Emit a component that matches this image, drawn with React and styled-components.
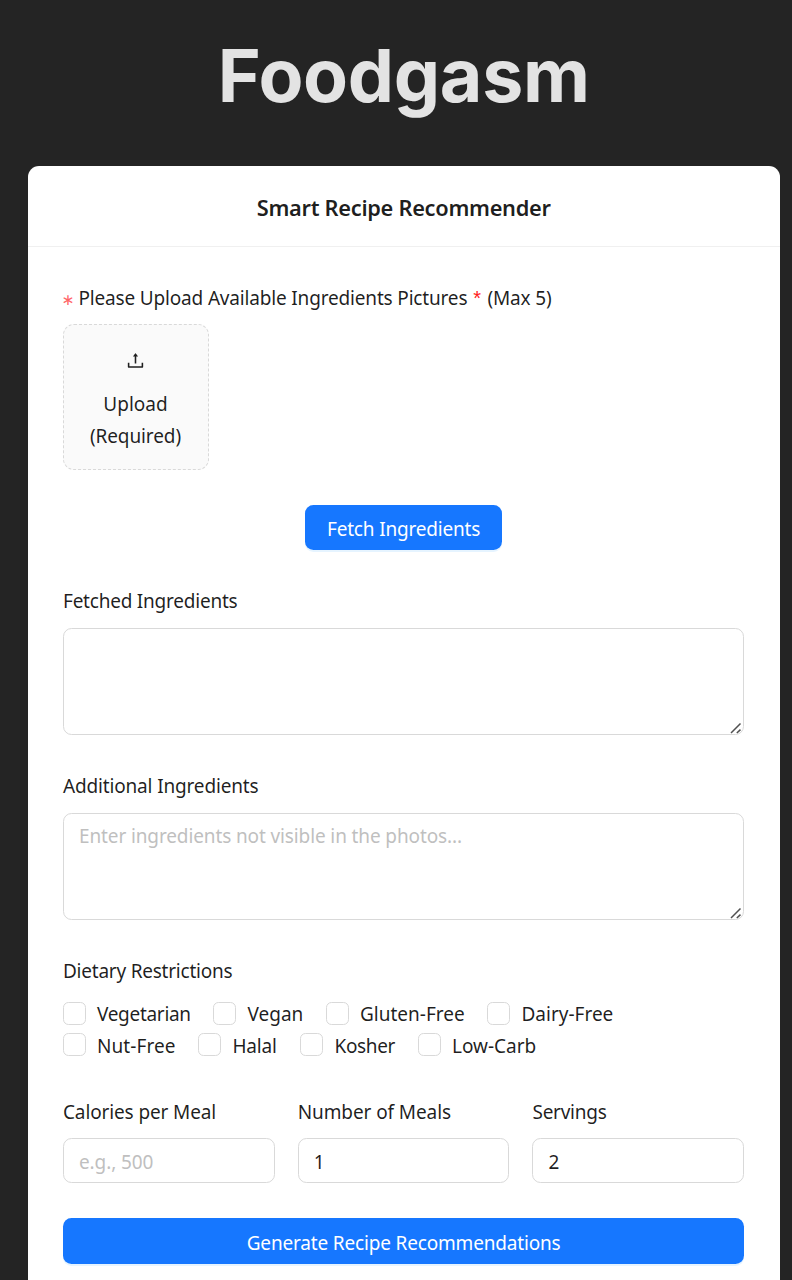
import React from "react";
import styled, { createGlobalStyle } from "styled-components";
import { AiOutlineUpload } from "react-icons/ai";

const GlobalStyle = createGlobalStyle`
  *, *::before, *::after { box-sizing: border-box; }
  html, body { margin: 0; height: 100%; overflow: hidden; background: #242424; }
  body, input, textarea, button {
    font-family: "Noto Sans", "Open Sans", sans-serif;
    font-size: 19px;
    color: rgba(0, 0, 0, 0.88);
  }
`;

const Page = styled.main`
  display: flex;
  flex-direction: column;
  padding: 0 12.4px 0 27.8px;
  height: 100vh;
  overflow: hidden;
`;

const Title = styled.h1`
  flex: none;
  margin: 0;
  height: 166px;
  padding-top: 31px;
  font-family: Inter, sans-serif;
  font-size: 73.4px;
  font-weight: 700;
  line-height: 90px;
  text-align: center;
  color: #e3e3e3;
  letter-spacing: -0.3px;
`;

const Card = styled.section`
  flex: none;
  height: 1160px;
  background: #fff;
  border-radius: 11px;
`;

const CardHeader = styled.header`
  height: 81px;
  display: flex;
  align-items: center;
  justify-content: center;
  border-bottom: 1px solid #f0f0f0;
  font-size: 21.8px;
  font-weight: 600;
  padding-top: 2px;
`;

const Form = styled.form`
  display: flex;
  flex-direction: column;
  gap: 34.7px;
  padding: 35px 35.4px 0 35.2px;
`;

const Field = styled.div`
  display: flex;
  flex-direction: column;
  min-width: 0;
`;

const Text = styled.span`
  letter-spacing: ${(p) => p.$track || 0}px;
  white-space: nowrap;
`;

const Label = styled.label`
  height: ${(p) => p.$height || 42.8}px;
  line-height: 33.4px;
  white-space: nowrap;
`;

const RequiredMark = styled.span`
  display: inline-block;
  width: 15.5px;
  font-family: "DejaVu Sans", sans-serif;
  font-size: 15.5px;
  text-indent: -1.5px;
  line-height: 20px;
  color: #ff6668;
`;

const Star = styled.span`
  margin: 0 2px 0 1px;
  font-family: "Liberation Sans", sans-serif;
  font-size: 20px;
  color: #ff2020;
`;

const UploadTile = styled.div`
  width: 146px;
  height: 146px;
  display: flex;
  flex-direction: column;
  align-items: center;
  padding: 25px 1px 0 0;
  border: 1px dashed #d9d9d9;
  border-radius: 11px;
  background: #fafafa;
  line-height: 31.5px;

  svg { display: block; margin-bottom: 18px; }
`;

const Button = styled.button`
  width: ${(p) => p.$width || "100%"};
  height: 45.8px;
  align-self: center;
  padding: 3.4px 0 0;
  border: 0;
  border-radius: 8.5px;
  background: #1677ff;
  color: #fff;
  box-shadow: 0 2px 0 rgba(5, 145, 255, 0.1);
`;

const AreaWrap = styled.div`
  position: relative;
  height: 107.5px;
`;

const Area = styled.textarea`
  display: block;
  width: 100%;
  height: 100%;
  padding: 6px 15px;
  border: 1px solid #d9d9d9;
  border-radius: 8.5px;
  background: #fff;
  line-height: 32px;
  resize: none;
  outline: none;
  letter-spacing: -0.12px;
  &::placeholder { color: #bfbfbf; }
`;

const Grip = styled.svg`
  position: absolute;
  right: 2px;
  bottom: 1.5px;
`;

const Options = styled.div`
  display: flex;
  flex-direction: column;
`;

const OptionRow = styled.div`
  display: flex;
  height: 31.5px;
`;

const Option = styled.label`
  display: flex;
  align-items: center;
  width: ${(p) => p.$width}px;
  padding-top: 1.4px;
  white-space: nowrap;
  line-height: 32px;
`;

const Check = styled.input`
  appearance: none;
  flex: none;
  width: 23px;
  height: 23px;
  margin: 0 11px 2px 0;
  border: 1px solid #d9d9d9;
  border-radius: 5.5px;
  background: #fff;
`;

const Columns = styled.div`
  display: grid;
  grid-template-columns: repeat(3, 1fr);
  column-gap: 23px;
`;

const NumberInput = styled.input`
  width: 100%;
  height: 45px;
  padding: 2px 15px 0;
  border: 1px solid #d9d9d9;
  border-radius: 8.5px;
  background: #fff;
  outline: none;
  letter-spacing: -0.1px;
  &::placeholder { color: #bfbfbf; }
`;

const rows = [
  [
    { name: "Vegetarian", width: 150.5, track: -0.3 },
    { name: "Vegan", width: 112.5 },
    { name: "Gluten-Free", width: 161.5 },
    { name: "Dairy-Free", width: 140 },
  ],
  [
    { name: "Nut-Free", width: 135.5, track: 0.08 },
    { name: "Halal", width: 102, track: -0.2 },
    { name: "Kosher", width: 117.5, track: -0.35 },
    { name: "Low-Carb", width: 140 },
  ],
];

function TextArea(props) {
  return (
    <AreaWrap>
      <Area {...props} />
      <Grip width="12" height="12" viewBox="0 0 12 12" fill="none" stroke="#505050" strokeWidth="1.5">
        <path d="M1 11 10.5 1.5M6.8 11 10.5 7.6" />
      </Grip>
    </AreaWrap>
  );
}

export default function App() {
  return (
    <Page>
      <GlobalStyle />
      <Title>Foodgasm</Title>
      <Card>
        <CardHeader>
          <Text $track={-0.3}>Smart Recipe Recommender</Text>
        </CardHeader>
        <Form>
          <Field>
            <Label $height={42}>
              <RequiredMark>∗</RequiredMark>
              <Text $track={-0.17}>
                Please Upload Available Ingredients Pictures <Star>*</Star> (Max 5)
              </Text>
            </Label>
            <UploadTile>
              <AiOutlineUpload size={21} />
              <Text>Upload</Text>
              <Text $track={-0.1}>(Required)</Text>
            </UploadTile>
          </Field>
          <Button type="button" $width="197px">
            <Text $track={-0.18}>Fetch Ingredients</Text>
          </Button>
          <Field>
            <Label><Text $track={-0.22}>Fetched Ingredients</Text></Label>
            <TextArea />
          </Field>
          <Field>
            <Label><Text $track={-0.16}>Additional Ingredients</Text></Label>
            <TextArea placeholder="Enter ingredients not visible in the photos..." />
          </Field>
          <Field>
            <Label><Text $track={-0.23}>Dietary Restrictions</Text></Label>
            <Options>
              {rows.map((row, i) => (
                <OptionRow key={i}>
                  {row.map((o) => (
                    <Option key={o.name} $width={o.width}>
                      <Check type="checkbox" />
                      <Text $track={o.track}>{o.name}</Text>
                    </Option>
                  ))}
                </OptionRow>
              ))}
            </Options>
          </Field>
          <Columns>
            <Field>
              <Label $height={42.6}><Text $track={-0.13}>Calories per Meal</Text></Label>
              <NumberInput placeholder="e.g., 500" />
            </Field>
            <Field>
              <Label $height={42.6}><Text $track={-0.1}>Number of Meals</Text></Label>
              <NumberInput defaultValue="1" />
            </Field>
            <Field>
              <Label $height={42.6}><Text $track={-0.25}>Servings</Text></Label>
              <NumberInput defaultValue="2" />
            </Field>
          </Columns>
          <Button type="button">
            <Text $track={-0.17}>Generate Recipe Recommendations</Text>
          </Button>
        </Form>
      </Card>
    </Page>
  );
}
